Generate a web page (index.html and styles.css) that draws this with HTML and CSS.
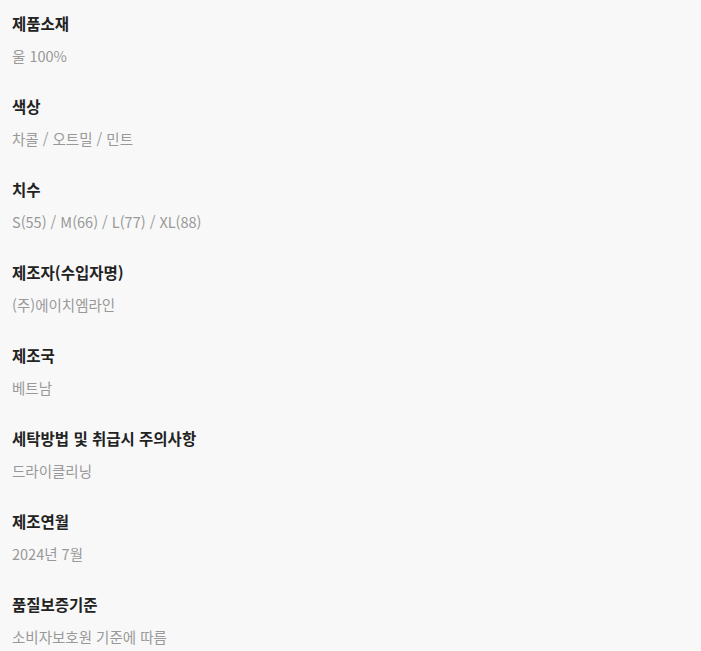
FILE: index.html
```html
<!DOCTYPE html>
<html lang="ko">
<head>
  <meta charset="UTF-8">
  <title>상품정보</title>
  <link rel="stylesheet" href="styles.css">
</head>
<body>
<div class="info">
  <dl class="item">
    <dt>제품소재</dt>
    <dd>울 100%</dd>
  </dl>
  <dl class="item">
    <dt>색상</dt>
    <dd>차콜 / 오트밀 / 민트</dd>
  </dl>
  <dl class="item">
    <dt>치수</dt>
    <dd>S(55) / M(66) / L(77) / XL(88)</dd>
  </dl>
  <dl class="item">
    <dt>제조자(수입자명)</dt>
    <dd>(주)에이치엠라인</dd>
  </dl>
  <dl class="item">
    <dt>제조국</dt>
    <dd>베트남</dd>
  </dl>
  <dl class="item">
    <dt>세탁방법 및 취급시 주의사항</dt>
    <dd>드라이클리닝</dd>
  </dl>
  <dl class="item">
    <dt>제조연월</dt>
    <dd>2024년 7월</dd>
  </dl>
  <dl class="item">
    <dt>품질보증기준</dt>
    <dd>소비자보호원 기준에 따름</dd>
  </dl>
</div>
</body>
</html>
```

FILE: styles.css
```css
*{
    margin: 0;
    padding: 0;
}
body{
    background: #f8f8f8;
    font-family: "Noto Sans CJK KR", "Noto Sans", sans-serif;
}
.info{
    padding: 12px 12px;
    display: flex;
    flex-direction: column;
    gap: 28px;
}
.item{
    display: flex;
    flex-direction: column;
    gap: 11px;
}
.item>dt{
    font-size: 15.5px;
    line-height: 22px;
    font-weight: 700;
    color: #222;
}
.item>dd{
    font-size: 14.5px;
    line-height: 22px;
    color: #999;
}
```
